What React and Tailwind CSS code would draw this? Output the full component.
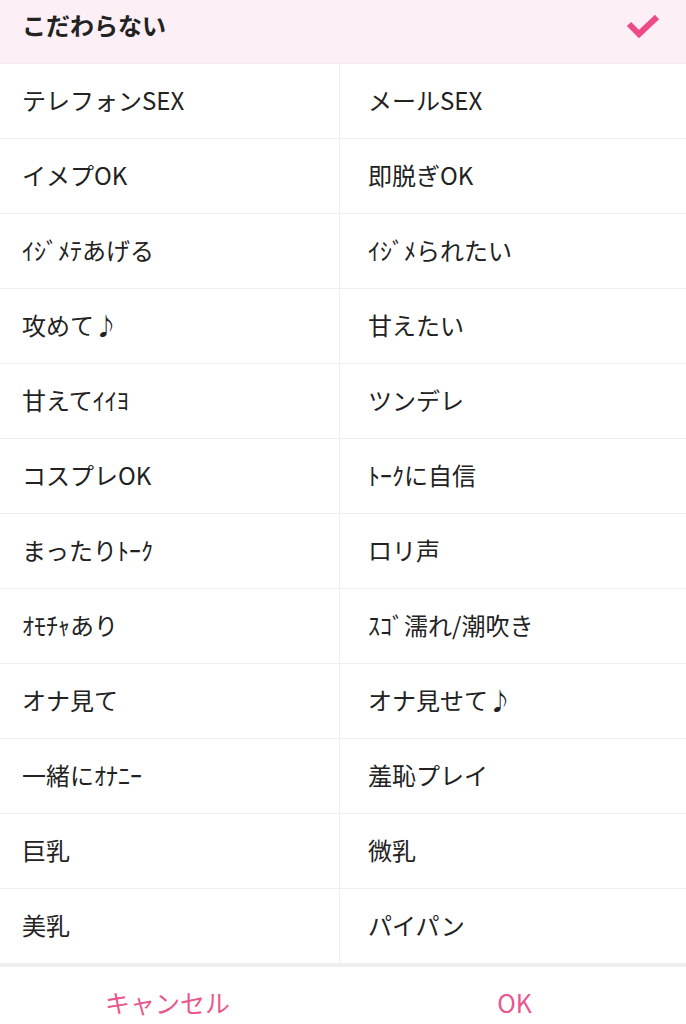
import React from 'react';

const rows = [
  ['テレフォンSEX', 'メールSEX'],
  ['イメプOK', '即脱ぎOK'],
  ['ｲｼﾞﾒﾃあげる', 'ｲｼﾞﾒられたい'],
  ['攻めて♪', '甘えたい'],
  ['甘えてｲｲﾖ', 'ツンデレ'],
  ['コスプレOK', 'ﾄｰｸに自信'],
  ['まったりﾄｰｸ', 'ロリ声'],
  ['ｵﾓﾁｬあり', 'ｽｺﾞ濡れ/潮吹き'],
  ['オナ見て', 'オナ見せて♪'],
  ['一緒にｵﾅﾆｰ', '羞恥プレイ'],
  ['巨乳', '微乳'],
  ['美乳', 'パイパン'],
];

const font = { fontFamily: '"Noto Sans CJK JP", "Noto Sans", sans-serif' };

export default function App() {
  return (
    <div className="w-[686px] h-[1024px] overflow-hidden bg-white" style={font}>
      <div className="h-[64px] bg-[#fdeff6] border-b border-[#f3e9ee]">
        <div className="h-[50px] flex items-center justify-between pl-[22px] pr-[26px]">
          <span className="text-[24px] font-bold text-[#222]">こだわらない</span>
          <svg width="34" height="26" viewBox="0 0 34 26" className="mt-[4px]">
            <polyline points="3,10 13,20 31,3" fill="none" stroke="#ef4a88" strokeWidth="6" strokeLinejoin="miter" />
          </svg>
        </div>
      </div>

      <div className="flex flex-col">
        {rows.map(([a, b], i) => (
          <div key={i} className="grid grid-cols-[340px_1fr] h-[75px] border-b border-[#eeeeee]">
            <div className="flex items-center pb-[3px] pl-[22px] border-r border-[#eeeeee] text-[24px] text-[#222]">{a}</div>
            <div className="flex items-center pb-[3px] pl-[28px] text-[24px] text-[#222]">{b}</div>
          </div>
        ))}
      </div>

      <div className="h-[3px] bg-[#efefef]" />

      <div className="grid grid-cols-2 h-[72px]">
        <div className="flex items-center justify-center pr-[8px] text-[25px] text-[#e9578f]">キャンセル</div>
        <div className="flex items-center justify-center text-[25px] text-[#e9578f]">OK</div>
      </div>
    </div>
  );
}
